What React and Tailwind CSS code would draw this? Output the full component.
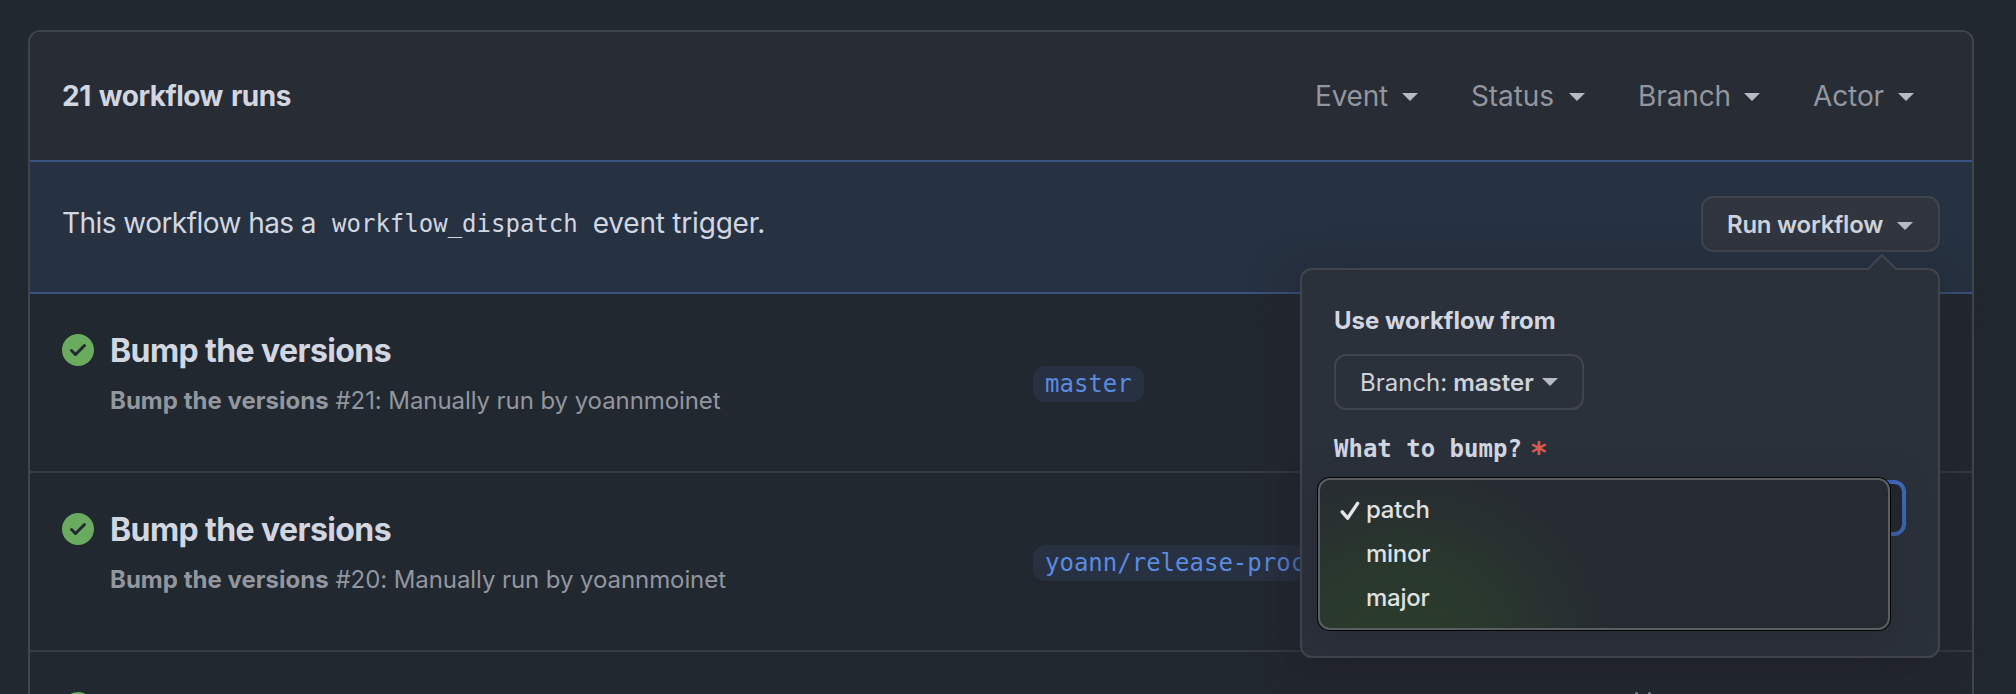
import React from "react";

const Caret = ({ className = "" }) => (
  <span
    className={`block h-0 w-0 shrink-0 border-x-8 border-t-8 border-x-transparent border-t-[#b6bac4] ${className}`}
  />
);

const CheckCircle = () => (
  <svg viewBox="0 0 16 16" className="size-8 shrink-0">
    <path
      fill="#6aab60"
      fillRule="evenodd"
      d="M8 16A8 8 0 1 0 8 0a8 8 0 0 0 0 16Zm3.78-9.72a.75.75 0 0 0-1.06-1.06L6.75 9.19 5.28 7.72a.75.75 0 0 0-1.06 1.06l2 2a.75.75 0 0 0 1.06 0l4.5-4.5Z"
    />
  </svg>
);

const CalendarIcon = () => (
  <svg viewBox="0 0 16 16" className="mt-10 size-8 shrink-0" fill="none" stroke="#92969f" strokeWidth="1.5" strokeLinecap="round">
    <path d="M4.75.75v2.5M11.25.75v2.5M2 6.5h12" />
    <rect x="2" y="2.75" width="12" height="12" rx="1" />
  </svg>
);

const filters = [
  { name: "Event", box: "w-[103px]", text: "tracking-[-0.2px]" },
  { name: "Status", box: "w-[114px]", text: "tracking-[-0.1px]" },
  { name: "Branch", box: "w-[122px]", text: "tracking-[-0.1px]" },
  { name: "Actor", box: "w-[101px]", text: "tracking-[-0.1px]" },
];

const runs = [
  { number: 21, branch: "master" },
  { number: 20, branch: "yoann/release-process" },
];

function Run({ number, branch }) {
  return (
    <div className="flex h-[179px] shrink-0 border-b-2 border-[#373b44] pl-8">
      <div className="flex w-[971px] shrink-0 gap-4 pt-10">
        <CheckCircle />
        <div className="whitespace-nowrap">
          <h3 className="pt-px text-[32px] leading-8 font-bold tracking-[-0.6px] text-[#d2d6e0]">Bump the versions</h3>
          <p className="mt-[18px] text-[24px] leading-8 text-[#92969f]">
            <span className="font-bold tracking-[0.02px]">Bump the versions</span>{" "}
            <span className="tracking-[-0.08px]">#{number}: Manually run by yoannmoinet</span>
          </p>
        </div>
      </div>
      <span className="mt-[72px] h-9 rounded-xl bg-[#283142] px-3 font-['DejaVu_Sans_Mono',monospace] text-[24px] leading-9 whitespace-nowrap text-[#5a8be0]">
        {branch}
      </span>
    </div>
  );
}

function Option({ label, checked }) {
  return (
    <div className="flex h-11 items-center pl-[18px] text-[24px] font-medium tracking-[-0.25px] text-[#dfe1e2]">
      <span className="w-7">
        {checked && (
          <svg viewBox="0 0 20 20" className="mt-0.5 ml-0.5 size-5" fill="none" stroke="#e4e6e6" strokeWidth="3.4" strokeLinecap="round" strokeLinejoin="round">
            <path d="M2.2 10.8 7.6 17.2 17.6 2.4" />
          </svg>
        )}
      </span>
      <span>{label}</span>
    </div>
  );
}

function DispatchPopover() {
  return (
    <div className="absolute top-[106px] right-8 z-10 h-[390px] w-[640px] rounded-xl border-2 border-[#40454d] bg-[#2b313b] px-8 pt-8 shadow-[0_16px_48px_rgba(34,34,42,0.8)]">
      <svg viewBox="0 0 28 16" className="absolute -top-4 right-[42px] h-4 w-7">
        <path d="M0 16 14 1.5 28 16Z" fill="#2b313b" />
        <path d="M0 15 14 1 28 15" fill="none" stroke="#40454d" strokeWidth="2" />
      </svg>
      <div className="h-9 pt-px text-[24px] leading-9 font-bold tracking-[0px] text-[#d2d6e0]">Use workflow from</div>
      <button className="mt-4 flex h-14 w-[250px] items-center rounded-xl border-2 border-[#40454d] pl-6 text-[24px] whitespace-nowrap text-[#cdd2db]">
        <span className="pt-0.5">Branch:</span>
        <span className="ml-1.5 pt-0.5 font-semibold">master</span>
        <Caret className="ml-2" />
      </button>
      <div className="mt-5 flex h-9 items-center pt-px font-['DejaVu_Sans_Mono',monospace] text-[24px] font-bold whitespace-nowrap text-[#d2d6e0]">
        What to bump?<span className="ml-2 h-9 pt-1 text-[30px] leading-9 font-bold text-[#dc5a50]">*</span>
      </div>
      <div className="relative mt-[14px] h-14 w-[572px] rounded-xl border-4 border-[#4169bd] bg-[#22272e]">
        <div className="absolute -top-[6px] -left-[20px] h-[152px] w-[572px] rounded-xl border-2 border-[#5c5f62] bg-[#262a32] bg-[radial-gradient(ellipse_220px_185px_at_80px_160px,#2a3b2c_0%,#2a392d_35%,rgba(38,42,50,0)_100%)] pt-2 shadow-[0_0_0_1px_#050505,0_10px_36px_rgba(34,34,42,0.5)]">
          <Option label="patch" checked />
          <Option label="minor" />
          <Option label="major" />
        </div>
      </div>
    </div>
  );
}

export default function App() {
  return (
    <div className="h-[694px] w-[2016px] overflow-hidden bg-[#22282f] pt-[30px] pl-[28px] font-[Inter,sans-serif]">
      <div className="flex h-[720px] w-[1946px] flex-col rounded-t-xl border-2 border-[#40454d]">
        <div className="flex h-32 shrink-0 items-center justify-between rounded-t-[10px] bg-[#282c34] pl-8 pr-[58px]">
          <h2 className="text-[28px] font-bold tracking-[-0.5px] text-[#d2d6e0] [word-spacing:2px]">21 workflow runs</h2>
          <div className="flex gap-[53px]">
            {filters.map((f) => (
              <div key={f.name} className={`flex items-center justify-between text-[28px] text-[#92969f] ${f.box}`}>
                <span className={f.text}>{f.name}</span>
                <Caret className="mt-0.5" />
              </div>
            ))}
          </div>
        </div>
        <div className="relative flex h-[134px] shrink-0 items-start justify-between border-y-2 border-[#38537f] bg-[#263141] pt-[34px] pr-8 pl-8">
          <div className="flex h-14 items-center pb-0.5 text-[28px] whitespace-nowrap text-[#d2d6e0]">
            <span className="tracking-[-0.55px]">This workflow has a</span>
            <code className="ml-4 pt-0.5 font-['DejaVu_Sans_Mono',monospace] text-[24px]">workflow_dispatch</code>
            <span className="ml-[15px] tracking-[-0.2px]">event trigger.</span>
          </div>
          <button className="flex h-14 w-[239px] items-center justify-between rounded-xl border-2 border-[#40454d] bg-[#30353f] pr-[25px] pl-6 text-[24px] font-semibold tracking-[-0.25px] whitespace-nowrap text-[#cdd2db]">
            <span className="pt-0.5">Run workflow</span>
            <Caret className="mt-[3px]" />
          </button>
          <DispatchPopover />
        </div>
        {runs.map((run) => (
          <Run key={run.number} {...run} />
        ))}
        <div className="flex h-[179px] shrink-0 justify-between pr-[313px] pl-8">
          <div className="pt-10">
            <CheckCircle />
          </div>
          <CalendarIcon />
        </div>
      </div>
    </div>
  );
}
